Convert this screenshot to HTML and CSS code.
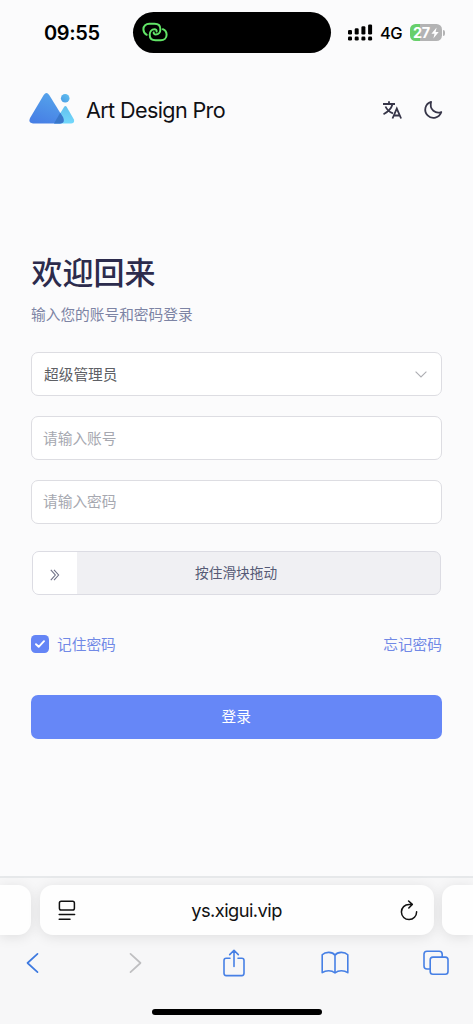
FILE: index.html
```html
<!DOCTYPE html>
<html lang="zh-CN">
<head>
<meta charset="utf-8">
<meta name="viewport" content="width=device-width, initial-scale=1">
<title>Art Design Pro</title>
<link rel="stylesheet" href="styles.css">
</head>
<body>
<div class="screen">
  <div class="status">
    <span class="clock">09:55</span>
    <div class="island">
      <svg width="28" height="24" viewBox="0 0 28 24" fill="none" stroke="#62e567" stroke-width="2" stroke-linecap="round">
        <path d="M4.7 14.8C2.6 13.6 1.4 11.8 1.4 9.2C1.4 5.7 4 3.8 7.3 3.8H12.5C16.2 3.8 18.4 5.9 18.4 9.2C18.4 12.4 16.4 14.5 13.8 14.5C12.4 14.5 11.5 13.6 11.7 12.4"/>
        <path d="M20.8 9.2C23.4 10.3 24.6 12.2 24.6 14.8C24.6 18.2 22 20.3 18.8 20.3H13.5C9.9 20.3 7.7 18.1 7.7 14.8C7.7 11.6 9.7 9.3 12.5 9.3C14 9.3 14.8 10.3 14.6 11.5"/>
      </svg>
    </div>
    <svg class="signal" width="25" height="18" viewBox="0 0 25 18" fill="#000">
      <rect x="0" y="6" width="4" height="4.5" rx="1.3"/><rect x="6.7" y="4.3" width="4" height="6.2" rx="1.3"/><rect x="13.4" y="2.2" width="4" height="8.3" rx="1.3"/><rect x="20.1" y="0.5" width="4" height="10" rx="1.3"/>
      <rect x="0" y="12.6" width="4" height="4" rx="1.3"/><rect x="6.7" y="12.6" width="4" height="4" rx="1.3"/><rect x="13.4" y="12.6" width="4" height="4" rx="1.3"/><rect x="20.1" y="12.6" width="4" height="4" rx="1.3"/>
    </svg>
    <span class="network">4G</span>
    <div class="battery"><span>27</span><svg width="8" height="12" viewBox="0 0 8 12" fill="#fff"><path d="M5.6 0.5L0.4 6.8H3.5L2.4 11.5L7.7 5H4.6Z"/></svg></div>
    <i class="battery-tip"></i>
  </div>

  <header class="header">
    <svg class="logo" width="46" height="32" viewBox="0 0 46 32">
      <defs>
        <linearGradient id="big" x1="0.7" y1="0" x2="0.3" y2="1"><stop offset="0" stop-color="#55a4eb"/><stop offset="1" stop-color="#477fe5"/></linearGradient>
        <linearGradient id="small" x1="0" y1="0" x2="0" y2="1"><stop offset="0" stop-color="#62bfee"/><stop offset="1" stop-color="#72d8fb"/></linearGradient>
        <linearGradient id="dot" x1="0" y1="1" x2="1" y2="0"><stop offset="0" stop-color="#4a9ce5"/><stop offset="1" stop-color="#62c0f0"/></linearGradient>
      </defs>
      <path fill="url(#small)" d="M35.2 14.8Q36.4 13 37.6 14.8L44.8 27.2Q46.2 31.5 42 31.5H25Z"/>
      <path fill="url(#big)" d="M14.7 3Q17.4 -0.8 20.2 3L34.1 25.6Q36.2 31.5 31 31.5H4Q-1.2 30.9 1.2 25.8Z"/>
      <path fill="#3977ca" d="M31.2 20.7L34.1 25.6Q36.2 31.5 31 31.5H25Z"/>
      <circle cx="36.2" cy="6.3" r="4.3" fill="url(#dot)"/>
    </svg>
    <span class="brand">Art Design Pro</span>
    <svg class="translate" width="20" height="20" viewBox="0 0 20 20" fill="none" stroke="#363548" stroke-width="1.8">
      <path d="M1 4H13M7 1.2V4M3.5 6.5Q5.7 11.5 11 13.4M10.6 4Q8.8 10.5 1.5 14.2"/>
      <path d="M10.5 18.5L14.8 8.6L19.1 18.5M12 15.5H17.6"/>
    </svg>
    <svg class="moon" width="20" height="20" viewBox="0 0 20 20" fill="none" stroke="#363548" stroke-width="1.8" stroke-linejoin="round"><path d="M8.1 1.8A8.2 8.2 0 1 0 18.3 12C13.1 14.1 5.8 10 8.1 1.8Z"/></svg>
  </header>

  <main class="login">
    <h1 class="title">欢迎回来</h1>
    <p class="subtitle">输入您的账号和密码登录</p>
    <div class="field select"><span>超级管理员</span>
      <svg width="12" height="7" viewBox="0 0 12 7" fill="none" stroke="#adaeb3" stroke-width="1.1"><path d="M0.6 0.6L6 6L11.4 0.6"/></svg>
    </div>
    <div class="field placeholder">请输入账号</div>
    <div class="field placeholder">请输入密码</div>
    <div class="slider">
      <div class="handle"><svg width="10" height="12" viewBox="0 0 10 12" fill="none" stroke="#6e7187" stroke-width="1.1"><path d="M0.8 0.8L5.3 6L0.8 11.2M4 0.8L8.6 6L4 11.2"/></svg></div>
      <span>按住滑块拖动</span>
    </div>
    <div class="options">
      <span class="checkbox"><svg width="10" height="8" viewBox="0 0 10 8" fill="none" stroke="#fff" stroke-width="1.9" stroke-linecap="round" stroke-linejoin="round"><path d="M1 4.2L3.7 6.8L9 1.2"/></svg></span>
      <span class="option-text">记住密码</span>
      <a class="option-text forgot">忘记密码</a>
    </div>
    <div class="submit">登录</div>
  </main>

  <footer class="browser">
    <div class="tabs">
      <div class="tab left-tab"></div>
      <div class="tab address">
        <svg width="18" height="21" viewBox="0 0 18 21" fill="none" stroke="#111" stroke-width="1.5" stroke-linecap="round"><rect x="1.4" y="1.3" width="15" height="8.8" rx="1.8"/><path d="M1.2 14.5H16.6M1.2 19.2H12"/></svg>
        <span class="url">ys.xigui.vip</span>
        <svg width="18" height="21" viewBox="0 0 18 21" fill="none" stroke="#111" stroke-width="1.5" stroke-linecap="round" stroke-linejoin="round"><path d="M12.2 4.4H9A7.6 7.6 0 1 0 16.6 11.8M8.6 1L12.3 4.4L8.8 8"/></svg>
      </div>
      <div class="tab right-tab"></div>
    </div>
    <nav class="toolbar">
      <span><svg width="13" height="22" viewBox="0 0 13 22" fill="none" stroke="#3e7ae0" stroke-width="1.7" stroke-linecap="round" stroke-linejoin="round"><path d="M11.5 1.8L1.5 11L11.5 20.2"/></svg></span>
      <span><svg width="13" height="22" viewBox="0 0 13 22" fill="none" stroke="#bfbfc1" stroke-width="1.7" stroke-linecap="round" stroke-linejoin="round"><path d="M1.5 1.8L11.5 11L1.5 20.2"/></svg></span>
      <span><svg width="22" height="28" viewBox="0 0 22 28" fill="none" stroke="#4780e5" stroke-width="1.6" stroke-linecap="round" stroke-linejoin="round"><path d="M7 9.2H3.2Q1 9.2 1 11.4V24.3Q1 26.6 3.2 26.6H18.8Q21 26.6 21 24.3V11.4Q21 9.2 18.8 9.2H15M11 17.5V1.5M6.7 5.6L11 1.3L15.3 5.6"/></svg></span>
      <span><svg width="28" height="24" viewBox="0 0 28 24" fill="none" stroke="#4780e5" stroke-width="1.6" stroke-linecap="round" stroke-linejoin="round"><path d="M14 4.2C11.4 0.5 4.4 0.5 1.2 3.8V21.7C4.8 19.2 10.5 19 14 22C17.5 19 23.2 19.2 26.8 21.7V3.8C23.6 0.5 16.6 0.5 14 4.2V22"/></svg></span>
      <span><svg width="26" height="26" viewBox="0 0 26 26" fill="none" stroke="#4780e5" stroke-width="1.6" stroke-linejoin="round"><rect x="7.2" y="7.1" width="17.8" height="17.2" rx="2.7"/><path d="M7.2 19H4Q1 19 1 16V4.3Q1 1.3 4 1.3H16.2Q19.2 1.3 19.2 4.3V7.1"/></svg></span>
    </nav>
    <div class="home-indicator"></div>
  </footer>
</div>
</body>
</html>
```
FILE: styles.css
```css
* { box-sizing: border-box; }
body {
  margin: 0;
  background: #fbfbfc;
  font-family: Inter, "Noto Sans CJK SC", sans-serif;
}
svg { display: block; flex: none; }
.screen {
  width: 473px;
  height: 1024px;
  display: flex;
  flex-direction: column;
  overflow: hidden;
}
.status {
  height: 65px;
  display: flex;
  align-items: center;
  padding-left: 44px;
  flex: none;
}
.clock { width: 89px; font-size: 20px; font-weight: 560; letter-spacing: -0.35px; line-height: 24px; }
.island {
  width: 198px;
  height: 41px;
  border-radius: 21px;
  background: #000;
  padding: 8px 0 0 9px;
}
.signal { margin-left: 17px; }
.network { width: 30px; margin-left: 7px; font-size: 16.5px; font-weight: 450; letter-spacing: -0.5px; }
.battery {
  width: 32px;
  height: 17px;
  border-radius: 5.5px;
  background: linear-gradient(90deg, #67cf6b 30%, #b3b3b4 30%);
  display: flex;
  align-items: center;
  justify-content: center;
  gap: 1px;
  color: #fff;
  font-size: 14.5px;
  font-weight: 700;
  line-height: 17px;
  letter-spacing: -0.3px;
}
.battery-tip { width: 2px; height: 6px; margin-left: 1px; border-radius: 0 2px 2px 0; background: #b3b3b4; }
.header {
  height: 90px;
  display: flex;
  align-items: center;
  padding: 0 30px 0 28.5px;
  flex: none;
}
.logo { margin-top: -4px; }
.brand { margin-left: 11.5px; width: 284px; font-size: 21.6px; letter-spacing: -0.63px; line-height: 28px; color: #101014; white-space: nowrap; }
.translate { margin-left: 12px; }
.moon { margin-left: 21px; }
.login {
  width: 412px;
  margin: 94.5px 0 0 30px;
  flex: 1;
  font-size: 14.7px;
}
.title { margin: 0; padding-left: 1.5px; height: 46px; font-size: 31px; line-height: 45px; font-weight: 500; color: #2c2b4c; }
.subtitle { margin: 7px 0 25.5px; padding-left: 1px; height: 24px; line-height: 24px; color: #7d84a4; }
.field {
  height: 44px;
  margin: 0 0 20px 0.5px;
  padding: 0 14px 2px 12.5px;
  display: flex;
  align-items: center;
  justify-content: space-between;
  background: #fff;
  border: 1px solid #dddde2;
  border-radius: 7px;
}
.field + .field { margin-bottom: 19.7px; }
.select { color: #5e6065; }
.select svg { margin-top: 2px; }
.placeholder { color: #a6a8b0; padding-left: 11.5px; }
.slider {
  height: 44px;
  margin: 27.5px 1px 0 2px;
  display: grid;
  grid-template-columns: 44px 1fr;
  align-items: center;
  background: #f0f0f3;
  border: 1px solid #dcdce3;
  border-radius: 7px;
  overflow: hidden;
  color: #555a75;
  font-size: 13.7px;
}
.slider span { padding: 0 0 2px 118px; }
.handle { height: 42px; display: flex; align-items: center; padding: 3px 0 0 17px; background: #fff; }
.options { height: 24px; margin: 37px 0 38.5px 1px; display: flex; align-items: center; color: #7189e6; }
.option-text { padding-bottom: 1px; }
.checkbox { width: 18px; height: 18px; margin-right: 8px; display: grid; place-items: center; border-radius: 4.5px; background: #6485f6; }
.forgot { margin-left: auto; }
.submit { height: 44px; margin-left: 0.5px; border-radius: 7px; background: #6687f7; color: #fff; text-align: center; line-height: 45.5px; }
.browser {
  height: 148px;
  flex: none;
  border-top: 2px solid #e7e9eb;
  background: #f7f7f8;
  display: flex;
  flex-direction: column;
  align-items: center;
}
.tabs { width: 473px; display: grid; grid-template-columns: 31px 394px 31px; gap: 8.5px; padding-top: 7px; }
.tab { height: 50px; background: #fefefe; border-radius: 13px; box-shadow: 0 2px 13px rgba(0, 0, 0, .1); }
.left-tab { border-radius: 0 13px 13px 0; }
.right-tab { border-radius: 13px 0 0 13px; }
.address { display: flex; align-items: center; justify-content: space-between; padding: 0 15px 0 18px; color: #111; }
.url { font-size: 18.3px; letter-spacing: -0.55px; padding-right: 3px; }
.toolbar { width: 504px; height: 56px; margin-right: 4px; flex: none; display: grid; grid-template-columns: repeat(5, 1fr); place-items: center; }
.toolbar span:nth-child(2) { padding-left: 3px; }
.home-indicator { width: 170px; height: 6px; margin-top: 18px; border-radius: 3px; background: #000; }
```
